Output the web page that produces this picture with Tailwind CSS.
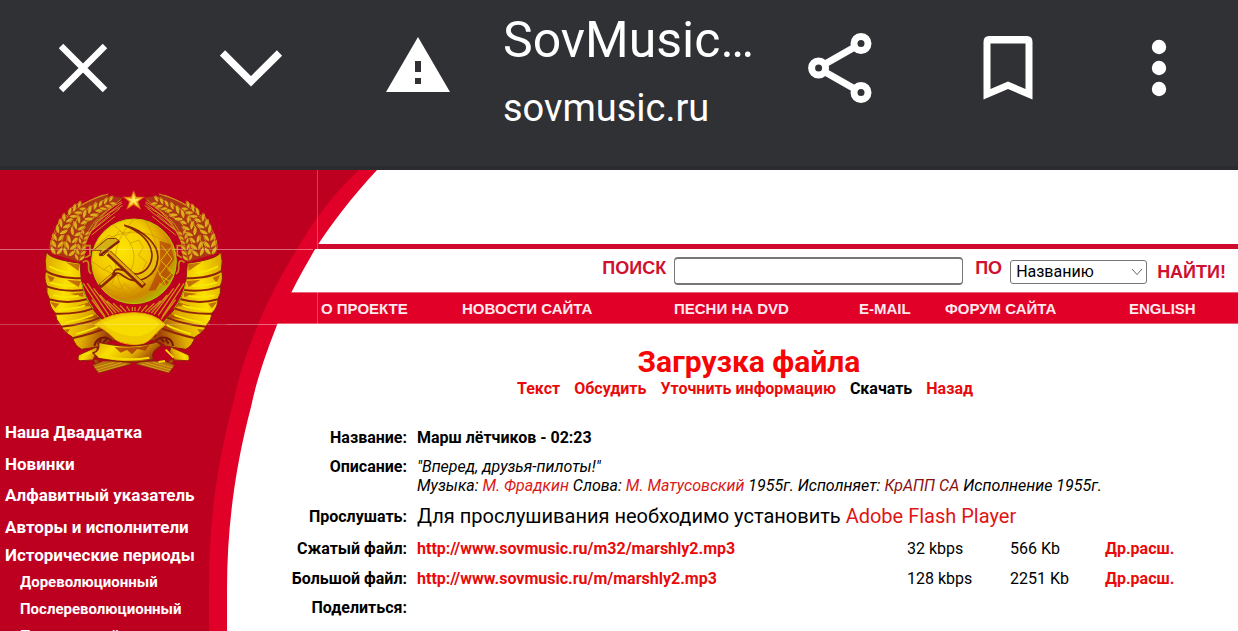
<!DOCTYPE html>
<html lang="ru">
<head>
  <meta charset="UTF-8">
  <meta name="viewport" content="width=device-width, initial-scale=1.0">
  <title>SovMusic.ru - Загрузка файла</title>
  <script src="https://cdn.jsdelivr.net/npm/@tailwindcss/browser@4"></script>
</head>
<body class="h-screen overflow-hidden flex flex-col bg-white text-black font-['Roboto',sans-serif]">
  <!-- Browser bar -->
  <header class="flex h-[170px] shrink-0 items-start bg-[#303135] border-b-4 border-[#2b2c30] text-white">
    <button aria-label="Закрыть" class="flex h-[136px] w-[168px] shrink-0 items-center justify-center">
      <svg class="h-[50px] w-[50px]" viewBox="0 0 50 50" fill="none" stroke="#fff" stroke-width="6.4"><path d="M2 3 46 47M46 3 2 47"/></svg>
    </button>
    <button aria-label="Свернуть" class="flex h-[136px] w-[168px] shrink-0 items-center justify-center">
      <svg class="h-[38px] w-[64px]" viewBox="0 0 64 38" fill="none" stroke="#fff" stroke-width="7.4"><path d="M2.500 4 31 32.300 59.500 4"/></svg>
    </button>
    <button aria-label="Не защищено" class="flex h-[136px] w-[164px] shrink-0 items-center justify-center">
      <svg class="h-[64px] w-[64px]" viewBox="0 3 64 64"><path fill="#fff" fill-rule="evenodd" d="M32 4 64 59H0ZM29 28V39H35V28ZM29 45V51H35V45Z"/></svg>
    </button>
    <div class="min-w-0 flex-1 pt-2 pl-[3px] whitespace-nowrap">
      <p class="text-[50px] leading-[64px]">SovMusic…</p>
      <p class="pt-[6px] text-[38px] leading-[60px]">sovmusic.ru</p>
    </div>
    <button aria-label="Поделиться" class="flex h-[136px] w-[168px] shrink-0 items-center justify-center">
      <svg class="h-[70px] w-[64px]" viewBox="0 0 64 70" fill="none" stroke="#fff" stroke-width="7"><circle cx="10.600" cy="35" r="7"/><circle cx="53" cy="10.500" r="7"/><circle cx="53" cy="59.500" r="7"/><path d="M17 31 46 14.500M17 39 46 55.500"/></svg>
    </button>
    <button aria-label="В закладки" class="flex h-[136px] w-[168px] shrink-0 items-center justify-center">
      <svg class="h-[64px] w-[50px]" viewBox="0 0 50 64"><path fill="#fff" fill-rule="evenodd" d="M6 0H44Q49.500 0 49.500 6V63.500L25 53 0.500 63.500V6Q0.500 0 6 0ZM7.500 7.500V53L25 45.500 42.500 53V7.500Z"/></svg>
    </button>
    <button aria-label="Меню" class="mr-3 flex h-[136px] w-[134px] shrink-0 items-center justify-center">
      <svg class="h-[58px] w-[16px]" viewBox="0 0 16 58" fill="#fff"><circle cx="8" cy="8" r="7.200"/><circle cx="8" cy="29" r="7.200"/><circle cx="8" cy="50" r="7.200"/></svg>
    </button>
  </header>

  <div class="flex flex-1">
    <!-- Sidebar -->
    <aside class="relative z-10 w-[260px] shrink-0 text-white">
      <svg class="pointer-events-none absolute left-0 top-0 h-[461px] w-[380px]" viewBox="0 0 380 461">
        <path fill="#e10028" d="M0 0H377C352 27 332 53 317 76C304 98 285 132 277 155C264 188 256 213 251 237C237 290 227 350 227 420V461H0Z"/>
        <path fill="#bd001f" d="M0 0H359C332 25 313 52 297 79C280 107 267 132 258 155C245 185 238 210 234 230C219 285 209 345 209 415V461H0Z"/>
        <path stroke="#fff" stroke-opacity=".25" d="M317.500 0V154M0 154.500H227"/>
        <path stroke="#fff" stroke-opacity=".4" d="M0 79.500H313M227 154.500H277"/>
      </svg>

      <!-- Emblem -->
      <svg class="relative ml-[30px] mt-[5px] h-[215px] w-[210px]" viewBox="0 0 630 645" role="img" aria-label="Герб СССР">
        <defs>
          <radialGradient id="ball" cx=".36" cy=".36" r=".72">
            <stop offset="0" stop-color="#fde500"/><stop offset=".5" stop-color="#f2c800"/><stop offset=".8" stop-color="#cf8600"/><stop offset="1" stop-color="#a5c400"/>
          </radialGradient>
          <linearGradient id="fold" x1="0" x2="1" y1="0" y2=".3">
            <stop offset="0" stop-color="#d8a400"/><stop offset=".35" stop-color="#fbe000"/><stop offset=".7" stop-color="#dfac00"/><stop offset="1" stop-color="#a04008"/>
          </linearGradient>
          <g id="ear" fill="#dcae1c" stroke="#a62b12" stroke-width="2">
            <path d="M0 0Q-22-5-19-27Q0-18 0 0M0 0Q22-5 19-27Q0-18 0 0M0-20Q-21-25-18-46Q0-38 0-20M0-20Q21-25 18-46Q0-38 0-20M0-40Q-19-45-15-66Q0-58 0-40M0-40Q19-45 15-66Q0-58 0-40"/>
            <path stroke="#e8c21c" d="M-14-24-20-42M14-24 20-42M-13-44-17-62M13-44 17-62"/>
          </g>
          <g id="side">
            <path fill="#a84710" d="M62 235C70 150 120 95 220 60L280 68C225 112 185 150 158 225L150 262Z" opacity=".75"/>
            <path fill="none" stroke="#d08e1b" stroke-width="3" d="M60 220C65 150 120 95 220 60M68 196C90 130 150 80 235 57M155 235C175 165 215 110 275 80M165 210C185 150 220 120 278 92M150 250C158 195 180 150 205 130M175 175 240 118M188 165 270 100M208 126 272 74M185 180 255 124M195 145 276 84"/>
            <use href="#ear" transform="translate(78 240) rotate(6)"/>
            <use href="#ear" transform="translate(86 178) rotate(28)"/>
            <use href="#ear" transform="translate(116 124) rotate(52) scale(.9)"/>
            <use href="#ear" transform="translate(113 245) rotate(14)"/>
            <use href="#ear" transform="translate(130 184) rotate(28)"/>
            <use href="#ear" transform="translate(160 132) rotate(52)"/>
            <use href="#ear" transform="translate(206 98) rotate(64) scale(.85)"/>
            <use href="#ear" transform="translate(146 258) rotate(12) scale(.8)"/>
            <use href="#ear" transform="translate(154 208) rotate(18) scale(.7)"/>
            <path fill="none" stroke="#c58a15" stroke-width="5" d="M166 212H180V240L166 248M158 262Q175 250 176 270Q174 292 184 296"/>
            <path fill="url(#fold)" stroke="#8f1c0c" stroke-width="3" d="M50 230Q56 252 150 265L154 315Q158 350 173 375Q182 400 217 433Q239 458 246 485Q269 484 270 499Q242 490 215 514L155 523Q135 514 127 486Q98 469 94 453Q76 433 76 414Q57 395 58 371Q47 354 51 333Q40 310 48 285Q42 258 50 230Z"/>
            <path fill="#a3300a" opacity=".6" d="M108 262 148 268 146 288ZM110 314 153 318 146 336ZM120 356 160 352 160 366ZM140 394 176 382 180 394ZM155 434 200 418 205 428ZM190 468 224 448 230 460ZM52 300 74 308 62 324ZM60 380 88 386 76 400ZM96 464 120 462 112 474Z"/>
            <path fill="none" stroke="#8f240b" stroke-width="6" d="M46 287Q80 310 153 310M50 334Q100 352 160 345M57 373Q115 389 173 372M75 416Q145 418 187 401M94 455Q165 448 210 428M127 490Q190 475 239 456"/>
            <path fill="none" stroke="#f8e800" stroke-width="5" d="M58 274Q85 290 125 294M60 322Q100 335 135 332M69 361Q120 371 147 362M86 404Q140 402 165 391M105 443Q160 432 189 420M139 477Q190 462 212 450"/>
            <path fill="none" stroke="#9bbd00" stroke-width="3" d="M154 320Q164 368 190 401M211 432Q235 452 243 478"/>
            <path fill="none" stroke="#d28b10" stroke-width="4" d="M160 325 225 425M172 325 237 421M191 340 250 418M210 360 258 414M185 374 229 433M230 377 268 412M249 385 276 410M270 391 288 410M290 394 299 408M307 396V408"/>
            <path fill="url(#fold)" stroke="#8f240b" stroke-width="3" d="M200 516 146 540Q140 558 152 557L204 554 212 571Q195 571 190 552L203 530Z"/>
            <path fill="#b9740b" stroke="#8d260c" stroke-width="2" d="M188 570 205 594 305 567 287 559 220 558Z"/>
            <path stroke="#e5b91e" stroke-width="2" d="M194 578 253 562M200 585 276 563M206 591 288 567"/>
          </g>
        </defs>
        <use href="#side"/>
        <use href="#side" transform="translate(622 0) scale(-1 1)"/>
        <path fill="#eca514" stroke="#d64b11" stroke-width="2" d="M311 47 319 66 343 66 324 80 332 103 311 89 290 103 298 80 280 66 303 66Z"/>
        <path fill="#ffe85b" d="M311 57 316 73 332 70 318 80 323 94 311 82 297 93 304 79 290 70 306 73Z"/>
        <!-- Globe -->
        <circle cx="312" cy="259" r="127" fill="url(#ball)" stroke="#b9c900" stroke-width="3"/>
        <g fill="none" stroke="#c79400" stroke-width="2">
          <path d="M194 215Q310 130 422 210M185 258Q300 355 438 265M203 323Q300 395 424 320M310 134Q205 245 302 384M345 137Q425 250 335 384M250 149Q340 220 300 290"/>
          <path d="M202 235 216 220 211 201 237 180 251 188 269 167 290 181 306 163 329 175M220 285 240 270 256 300 244 329 270 345 284 326 307 350 330 335M300 205 327 195 340 218 325 240 350 261 338 285"/>
        </g>
        <path fill="#b03a09" opacity=".65" d="M389 197 421 208 433 253 411 284 430 300 408 333 389 322 379 345 356 348 378 299 391 265Z"/>
        <path fill="none" stroke="#d8b800" stroke-width="3" d="M395 211 426 252 388 300 420 320M423 217 392 257 428 291 379 343M380 280 410 335"/>
        <path stroke="#8e2408" stroke-width="14" stroke-linecap="round" d="M212 332 254 296"/>
        <path stroke="#e4bd0d" stroke-width="5" d="M211 329 249 296"/>
        <path fill="#e6bd08" stroke="#872308" stroke-width="5" d="M283 151C350 168 388 215 383 254C378 302 335 324 300 314C280 307 268 285 249 298L254 286C272 274 290 297 323 297C352 290 366 264 366 238C362 204 341 174 283 151Z"/>
        <path stroke="#872308" stroke-width="18" d="M236 234 342 334"/>
        <path stroke="#dca90c" stroke-width="8" d="M234 228 340 328"/>
        <path fill="#d3b014" stroke="#87380b" stroke-width="3" d="M190 226 232 191 257 190 267 197 220 242 207 240 214 226Z"/>
        <path stroke="#842108" stroke-width="7" d="M209 242 268 198"/>
        <!-- Sun and lower ribbon -->
        <path fill="#f0cb00" stroke="#e6a900" stroke-width="3" d="M192 449Q240 413 312 413Q374 413 406 449Q382 468 365 489Q345 510 315 509Q265 507 249 487Q224 460 192 449Z"/>
        <path fill="#f8dc00" d="M217 444Q270 422 315 421Q365 422 390 446Q358 484 310 484Q254 480 217 444Z"/>
        <path fill="none" stroke="#771708" stroke-width="6" d="M193 513Q200 486 229 488L246 497M429 513Q426 486 393 488L376 497M203 508 214 493M218 504 230 492M416 506 407 493M403 501 393 492"/>
        <path fill="url(#fold)" stroke="#8b200a" stroke-width="4" d="M206 502Q309 525 381 500L396 512Q358 533 372 553Q312 570 205 550L189 534Q210 530 206 502Z"/>
        <path fill="#a62a0b" opacity=".75" d="M253 516Q321 521 358 510L346 527 322 522 306 538 291 525 272 533Z"/>
        <path fill="none" stroke="#f4dc00" stroke-width="6" d="M213 543Q290 560 358 548M156 544 185 531M407 524 431 548M386 561 405 558"/>
        <path stroke="#fff" stroke-opacity=".35" stroke-width="2" d="M60 223H565M80 448H540"/>
      </svg>

      <nav class="relative pl-[5px] pt-6 text-[17px] font-bold whitespace-nowrap">
        <a href="#" class="block pt-[2px] leading-8">Наша Двадцатка</a>
        <a href="#" class="block leading-8">Новинки</a>
        <a href="#" class="block leading-[31px]">Алфавитный указатель</a>
        <a href="#" class="block leading-8">Авторы и исполнители</a>
        <p class="leading-6">Исторические периоды</p>
        <div class="pt-[2px] pl-[15px] text-[15px] leading-[27px]">
          <a href="#" class="block">Дореволюционный</a>
          <a href="#" class="block">Послереволюционный</a>
          <a href="#" class="block">Предвоенный</a>
        </div>
      </nav>
    </aside>

    <div class="min-w-0 flex-1">
      <!-- Search -->
      <form class="mt-[74px] flex h-12 items-center justify-end border-t-[5px] border-[#d00a2c] pr-3 font-['Liberation_Sans',sans-serif] text-[18px] font-bold text-[#d0102f]">
        <label for="query" class="mr-2 pb-1">ПОИСК</label>
        <input id="query" type="text" class="h-7 w-[289px] rounded-[4px] border-x border-y-2 border-[#767676] bg-white px-1 font-['Roboto',sans-serif] font-normal text-black">
        <label for="field" class="ml-3 mr-2 pb-1">ПО</label>
        <div class="relative pt-[2px]">
          <select id="field" class="block h-6 w-[137px] appearance-none rounded-[3px] border border-[#767676] bg-white pl-[5px] font-['Roboto',sans-serif] text-base leading-5 font-normal text-black">
            <option>Названию</option>
            <option>Автору</option>
          </select>
          <svg class="pointer-events-none absolute right-1 top-[10px] h-2 w-3" viewBox="0 0 12 8" fill="none" stroke="#666"><path d="M1 1 6 6.500 11 1"/></svg>
        </div>
        <button type="submit" class="ml-[10px] pt-1">НАЙТИ!</button>
      </form>

      <!-- Sections -->
      <nav class="grid h-8 grid-cols-[141fr_212fr_185fr_86fr_184fr_109fr] items-center border-y border-[#ec6078] bg-[#e10028] pt-[2px] pl-[61px] font-['Liberation_Sans',sans-serif] text-[15px] font-bold whitespace-nowrap text-[#ffe8ee]">
        <a href="#">О ПРОЕКТЕ</a>
        <a href="#">НОВОСТИ САЙТА</a>
        <a href="#">ПЕСНИ НА DVD</a>
        <a href="#">E-MAIL</a>
        <a href="#">ФОРУМ САЙТА</a>
        <a href="#">ENGLISH</a>
      </nav>

      <!-- File -->
      <main class="pt-[22px]">
        <h1 class="text-center text-[30px] leading-8 font-bold text-[#f50505]">Загрузка файла</h1>
        <div class="flex justify-center gap-[14px] pt-[1px] pr-2 text-base leading-5 font-bold text-[#e90b0b]">
          <a href="#">Текст</a>
          <a href="#">Обсудить</a>
          <a href="#">Уточнить информацию</a>
          <span class="text-black">Скачать</span>
          <a href="#">Назад</a>
        </div>

        <table class="mt-6 w-full table-fixed text-left text-base leading-[19px]">
          <colgroup><col class="w-[157px]"><col class="w-[490px]"><col class="w-[103px]"><col class="w-[95px]"><col></colgroup>
          <tbody>
            <tr class="h-[29px]">
              <th class="pr-[10px] text-right font-bold">Название:</th>
              <td colspan="4" class="font-bold">Марш лётчиков - 02:23</td>
            </tr>
            <tr class="h-12 align-top">
              <th class="pt-[5px] pr-[10px] text-right font-bold">Описание:</th>
              <td colspan="4" class="pt-[5px] italic">"Вперед, друзья-пилоты!"<br>Музыка: <a href="#" class="text-[#d91a1a]">М. Фрадкин</a> Слова: <a href="#" class="text-[#d91a1a]">М. Матусовский</a> 1955г. Исполняет: <a href="#" class="text-[#8b1111]">КрАПП СА</a> Исполнение 1955г.</td>
            </tr>
            <tr class="h-8">
              <th class="pr-[10px] text-right font-bold">Прослушать:</th>
              <td colspan="4" class="text-xl">Для прослушивания необходимо установить <a href="#" class="text-[#e01515]">Adobe Flash Player</a></td>
            </tr>
            <tr class="h-8">
              <th class="pr-[10px] text-right font-bold">Сжатый файл:</th>
              <td class="font-bold text-[#e90b0b]"><a href="#">http://www.sovmusic.ru/m32/marshly2.mp3</a></td>
              <td>32 kbps</td>
              <td>566 Kb</td>
              <td class="font-bold text-[#e90b0b]"><a href="#">Др.расш.</a></td>
            </tr>
            <tr class="h-[29px]">
              <th class="pr-[10px] text-right font-bold">Большой файл:</th>
              <td class="font-bold text-[#e90b0b]"><a href="#">http://www.sovmusic.ru/m/marshly2.mp3</a></td>
              <td>128 kbps</td>
              <td>2251 Kb</td>
              <td class="font-bold text-[#e90b0b]"><a href="#">Др.расш.</a></td>
            </tr>
            <tr class="h-[29px]">
              <th class="pr-[10px] text-right font-bold">Поделиться:</th>
              <td colspan="4"></td>
            </tr>
          </tbody>
        </table>
      </main>
    </div>
  </div>
</body>
</html>
